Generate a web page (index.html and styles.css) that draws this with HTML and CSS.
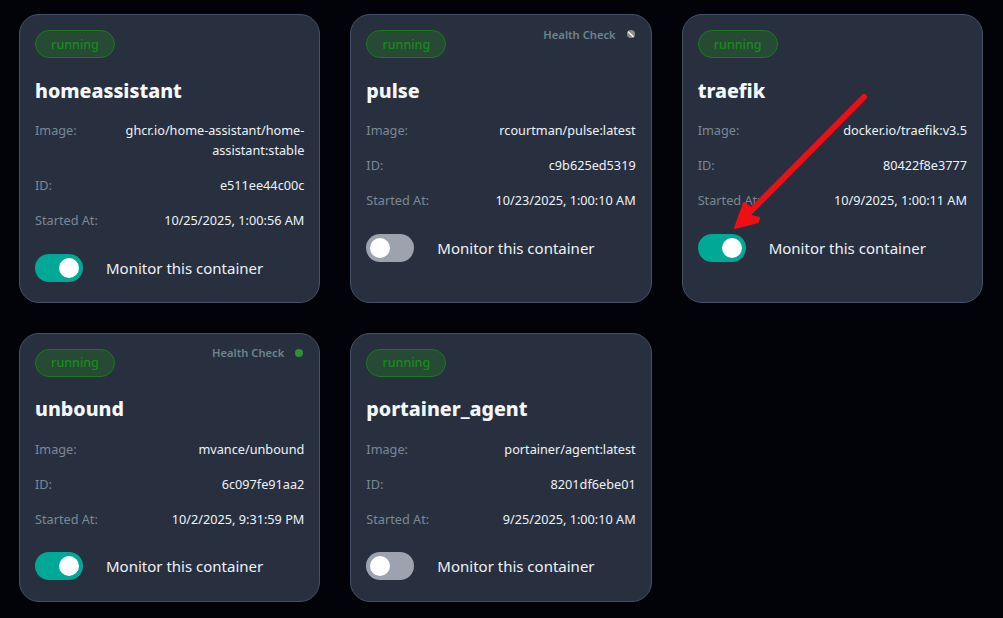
FILE: index.html
```html
<!DOCTYPE html>
<html lang="en">
<head>
<meta charset="utf-8">
<title>Containers</title>
<link rel="stylesheet" href="styles.css">
</head>
<body>
<main class="grid">
  <article class="card">
    <span class="badge">running</span>
    <h2 class="name">homeassistant</h2>
    <dl class="info">
      <div class="row"><dt>Image:</dt><dd>ghcr.io/home-assistant/home-assistant:stable</dd></div>
      <div class="row"><dt>ID:</dt><dd>e511ee44c00c</dd></div>
      <div class="row"><dt>Started At:</dt><dd>10/25/2025, 1:00:56 AM</dd></div>
    </dl>
    <div class="monitor"><span class="switch on"><span class="knob"></span></span><span class="monitor-label">Monitor this container</span></div>
  </article>
  <article class="card">
    <span class="badge">running</span>
    <div class="health"><span>Health Check</span><svg class="dot" viewBox="0 0 8 8"><circle cx="4" cy="4" r="4" fill="#8f8f88"/><path d="M1 1.6 6.6 7" stroke="#fff" stroke-width="1.3"/></svg></div>
    <h2 class="name">pulse</h2>
    <dl class="info">
      <div class="row"><dt>Image:</dt><dd>rcourtman/pulse:latest</dd></div>
      <div class="row"><dt>ID:</dt><dd>c9b625ed5319</dd></div>
      <div class="row"><dt>Started At:</dt><dd>10/23/2025, 1:00:10 AM</dd></div>
    </dl>
    <div class="monitor"><span class="switch"><span class="knob"></span></span><span class="monitor-label">Monitor this container</span></div>
  </article>
  <article class="card">
    <span class="badge">running</span>
    <h2 class="name">traefik</h2>
    <dl class="info">
      <div class="row"><dt>Image:</dt><dd>docker.io/traefik:v3.5</dd></div>
      <div class="row"><dt>ID:</dt><dd>80422f8e3777</dd></div>
      <div class="row"><dt>Started At:</dt><dd>10/9/2025, 1:00:11 AM</dd></div>
    </dl>
    <div class="monitor"><span class="switch on"><span class="knob"></span></span><span class="monitor-label">Monitor this container</span></div>
  </article>
  <article class="card">
    <span class="badge">running</span>
    <div class="health"><span>Health Check</span><svg class="dot" viewBox="0 0 8 8"><circle cx="4" cy="4" r="4" fill="#2f9132"/></svg></div>
    <h2 class="name">unbound</h2>
    <dl class="info">
      <div class="row"><dt>Image:</dt><dd>mvance/unbound</dd></div>
      <div class="row"><dt>ID:</dt><dd>6c097fe91aa2</dd></div>
      <div class="row"><dt>Started At:</dt><dd>10/2/2025, 9:31:59 PM</dd></div>
    </dl>
    <div class="monitor"><span class="switch on"><span class="knob"></span></span><span class="monitor-label">Monitor this container</span></div>
  </article>
  <article class="card">
    <span class="badge">running</span>
    <h2 class="name">portainer_agent</h2>
    <dl class="info">
      <div class="row"><dt>Image:</dt><dd>portainer/agent:latest</dd></div>
      <div class="row"><dt>ID:</dt><dd>8201df6ebe01</dd></div>
      <div class="row"><dt>Started At:</dt><dd>9/25/2025, 1:00:10 AM</dd></div>
    </dl>
    <div class="monitor"><span class="switch"><span class="knob"></span></span><span class="monitor-label">Monitor this container</span></div>
  </article>
</main>
<svg class="arrow" viewBox="0 0 1003 618" aria-hidden="true">
  <path class="arrow-shaft" d="M864 97 748 214"/>
  <path class="arrow-head" d="M735 228 744 203 750 207 748 215 759 218 758 222Z"/>
</svg>
</body>
</html>
```

FILE: styles.css
```css
* { box-sizing: border-box; }
html, body { margin: 0; height: 100%; }
body {
  background: #020308;
  color: #f1f5f9;
  font-family: "Noto Sans", sans-serif;
  overflow: hidden;
  position: relative;
}
.grid {
  display: grid;
  grid-template-columns: repeat(3, 1fr);
  column-gap: 30px;
  row-gap: 29.5px;
  padding: 14.3px 20px 0 19px;
  align-items: stretch;
}
.card {
  position: relative;
  background: #283040;
  border: 1px solid #465166;
  border-radius: 20px;
  padding: 15px 15px 20.5px;
}
.badge {
  display: flex;
  align-items: center;
  justify-content: center;
  width: 80px;
  height: 28px;
  border: 1px solid #187a1c;
  border-radius: 14px;
  background: #264a33;
  color: #1a8a1e;
  font-size: 12.5px;
  font-weight: 500;
}
.health {
  position: absolute;
  top: 11px;
  right: 16px;
  display: flex;
  align-items: center;
  gap: 11px;
  height: 16px;
  color: #6b868c;
  font-size: 11.2px;
  font-weight: 600;
}
.dot { width: 8px; height: 8px; }
.name {
  margin: 17.6px 0 0;
  font-size: 19.6px;
  font-weight: 800;
  line-height: 30px;
  color: #f5f8fb;
}
.info { margin: 14.4px 0 0; }
.row {
  display: flex;
  justify-content: space-between;
  gap: 16px;
  margin-bottom: 15px;
  font-size: 12.7px;
  line-height: 20px;
}
dt { color: #7a8896; white-space: nowrap; }
dd { margin: 0; text-align: right; color: #edf2f7; }
.monitor {
  display: flex;
  align-items: center;
  gap: 23px;
  margin-top: 23.5px;
}
.switch {
  display: flex;
  align-items: center;
  width: 48px;
  height: 28px;
  padding: 0 4px;
  border-radius: 14px;
  background: #9ca3af;
  flex: none;
}
.switch.on {
  background: #00a896;
  justify-content: flex-end;
}
.knob {
  width: 20px;
  height: 20px;
  border-radius: 50%;
  background: #fff;
}
.monitor-label {
  font-size: 15px;
  line-height: 24px;
  color: #edf2f7;
}
.arrow {
  position: absolute;
  left: 0;
  top: 0;
  width: 1003px;
  height: 618px;
  pointer-events: none;
}
.arrow-shaft {
  fill: none;
  stroke: #ee0f14;
  stroke-width: 6;
  stroke-linecap: round;
}
.arrow-head {
  fill: #ee0f14;
  stroke: #ee0f14;
  stroke-width: 2;
  stroke-linejoin: round;
}
```
